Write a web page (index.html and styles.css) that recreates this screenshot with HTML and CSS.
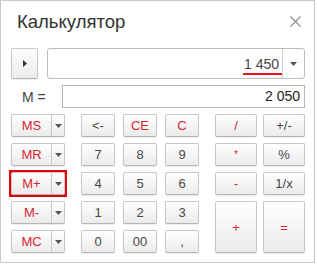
FILE: index.html
```html
<!DOCTYPE html>
<html lang="ru">
<head>
<meta charset="utf-8">
<title>Калькулятор</title>
<link rel="stylesheet" href="styles.css">
</head>
<body>
<div class="window">
  <div class="titlebar">
    <span class="title">Калькулятор</span>
    <svg class="close" width="11" height="11" viewBox="0 0 11 11"><path d="M0.5 0.5L10.5 10.5M10.5 0.5L0.5 10.5" stroke="#8a8a8a" stroke-width="1.1" fill="none"/></svg>
  </div>
  <div class="row-input">
    <button class="btn side-btn"><svg width="4" height="7" viewBox="0 0 4 7"><path d="M0 0L4 3.5L0 7Z" fill="#333"/></svg></button>
    <div class="combo">
      <div class="combo-value"><span class="num">1 450</span></div>
      <div class="combo-drop"><svg width="7" height="4" viewBox="0 0 7 4"><path d="M0 0H7L3.5 4Z" fill="#555"/></svg></div>
    </div>
  </div>
  <div class="row-mem">
    <span class="mlabel">M =</span>
    <div class="mfield">2 050</div>
  </div>
  <div class="keypad">
    <div class="mem-col">
      <div class="split"><span class="split-main red">MS</span><span class="split-drop"><svg width="7" height="4" viewBox="0 0 7 4"><path d="M0 0H7L3.5 4Z" fill="#555"/></svg></span></div>
      <div class="split"><span class="split-main red">MR</span><span class="split-drop"><svg width="7" height="4" viewBox="0 0 7 4"><path d="M0 0H7L3.5 4Z" fill="#555"/></svg></span></div>
      <div class="mark"><div class="split"><span class="split-main red">M+</span><span class="split-drop"><svg width="7" height="4" viewBox="0 0 7 4"><path d="M0 0H7L3.5 4Z" fill="#555"/></svg></span></div></div>
      <div class="split"><span class="split-main red">M-</span><span class="split-drop"><svg width="7" height="4" viewBox="0 0 7 4"><path d="M0 0H7L3.5 4Z" fill="#555"/></svg></span></div>
      <div class="split"><span class="split-main red">MC</span><span class="split-drop"><svg width="7" height="4" viewBox="0 0 7 4"><path d="M0 0H7L3.5 4Z" fill="#555"/></svg></span></div>
    </div>
    <div class="num-grid">
      <button class="btn">&lt;-</button>
      <button class="btn red">CE</button>
      <button class="btn red">C</button>
      <button class="btn">7</button>
      <button class="btn">8</button>
      <button class="btn">9</button>
      <button class="btn">4</button>
      <button class="btn">5</button>
      <button class="btn">6</button>
      <button class="btn">1</button>
      <button class="btn">2</button>
      <button class="btn">3</button>
      <button class="btn">0</button>
      <button class="btn">00</button>
      <button class="btn">,</button>
    </div>
    <div class="op-grid">
      <button class="btn red">/</button>
      <button class="btn">+/-</button>
      <button class="btn red small">*</button>
      <button class="btn">%</button>
      <button class="btn red">-</button>
      <button class="btn">1/x</button>
      <button class="btn red tall">+</button>
      <button class="btn red tall">=</button>
    </div>
  </div>
</div>
</body>
</html>
```

FILE: styles.css
```css
* { box-sizing: border-box; }
html, body { margin: 0; padding: 0; background: #fff; }
body { font-family: Arial, "Liberation Sans", sans-serif; color: #444; }

.window {
  width: 315px;
  height: 263px;
  border: 1px solid #c9c9c9;
  background: #fff;
}

.titlebar {
  height: 41px;
  display: flex;
  align-items: center;
  justify-content: space-between;
  padding: 0 13px 0 16px;
  margin-bottom: 6px;
}
.title { font-size: 18.5px; color: #333; line-height: 21px; }
.close { display: block; }

.btn {
  font-family: Arial, "Liberation Sans", sans-serif;
  font-size: 13px;
  color: #484848;
  background: linear-gradient(#ffffff, #ebebeb);
  border: 1px solid #c8c8c8;
  border-bottom-color: #b5b5b5;
  border-radius: 2px;
  box-shadow: 0 1px 1px rgba(0,0,0,0.08);
  padding: 0;
  margin: 0;
  display: flex;
  align-items: center;
  justify-content: center;
  height: 23px;
}
.red { color: #d8262e; }
.small { font-size: 10px; }

.row-input {
  display: flex;
  padding-left: 10px;
  gap: 9px;
  height: 31px;
}
.side-btn { width: 27px; height: 31px; }
.combo {
  width: 258px;
  height: 31px;
  display: flex;
  border: 1px solid #bdbdbd;
  border-radius: 3px;
  background: #fff;
}
.combo-value {
  flex: 1;
  display: flex;
  align-items: center;
  justify-content: flex-end;
  font-size: 14px;
  color: #444;
  border-right: 1px solid #d0d0d0;
}
.num {
  padding: 0 3px 1px 1px;
  border-bottom: 2px solid #e0141e;
  line-height: 16px;
  margin-top: 3px;
}
.combo-drop {
  width: 21px;
  display: flex;
  align-items: center;
  justify-content: center;
}

.row-mem {
  display: flex;
  align-items: center;
  margin-top: 6px;
  height: 23px;
}
.mlabel {
  width: 61px;
  padding-left: 21px;
  font-size: 14px;
  color: #444;
}
.mfield {
  width: 243px;
  height: 23px;
  border: 1px solid #b5b5b5;
  font-size: 14px;
  color: #222;
  text-align: right;
  padding-right: 4px;
  line-height: 21px;
}

.keypad {
  display: flex;
  margin-top: 6px;
  padding-left: 10px;
}
.mem-col {
  width: 54px;
  display: flex;
  flex-direction: column;
  gap: 6px;
}
.split {
  display: flex;
  height: 23px;
  border: 1px solid #c8c8c8;
  border-bottom-color: #b5b5b5;
  border-radius: 2px;
  background: linear-gradient(#ffffff, #ebebeb);
  box-shadow: 0 1px 1px rgba(0,0,0,0.08);
}
.mark {
  margin: -2px -2px -2px -2px;
  border: 3px solid #e3000f;
  padding: 0;
}
.mark .split { margin: -1px; }
.split-main {
  width: 40px;
  display: flex;
  align-items: center;
  justify-content: center;
  font-size: 13px;
  border-right: 1px solid #c8c8c8;
}
.split-drop {
  flex: 1;
  display: flex;
  align-items: center;
  justify-content: center;
}

.num-grid {
  margin-left: 16px;
  display: grid;
  grid-template-columns: repeat(3, 34px);
  grid-auto-rows: 23px;
  column-gap: 8px;
  row-gap: 6px;
}
.op-grid {
  margin-left: 16px;
  display: grid;
  grid-template-columns: repeat(2, 42px);
  grid-auto-rows: 23px;
  column-gap: 6px;
  row-gap: 6px;
}
.tall { grid-row: span 2; height: auto; }
```
